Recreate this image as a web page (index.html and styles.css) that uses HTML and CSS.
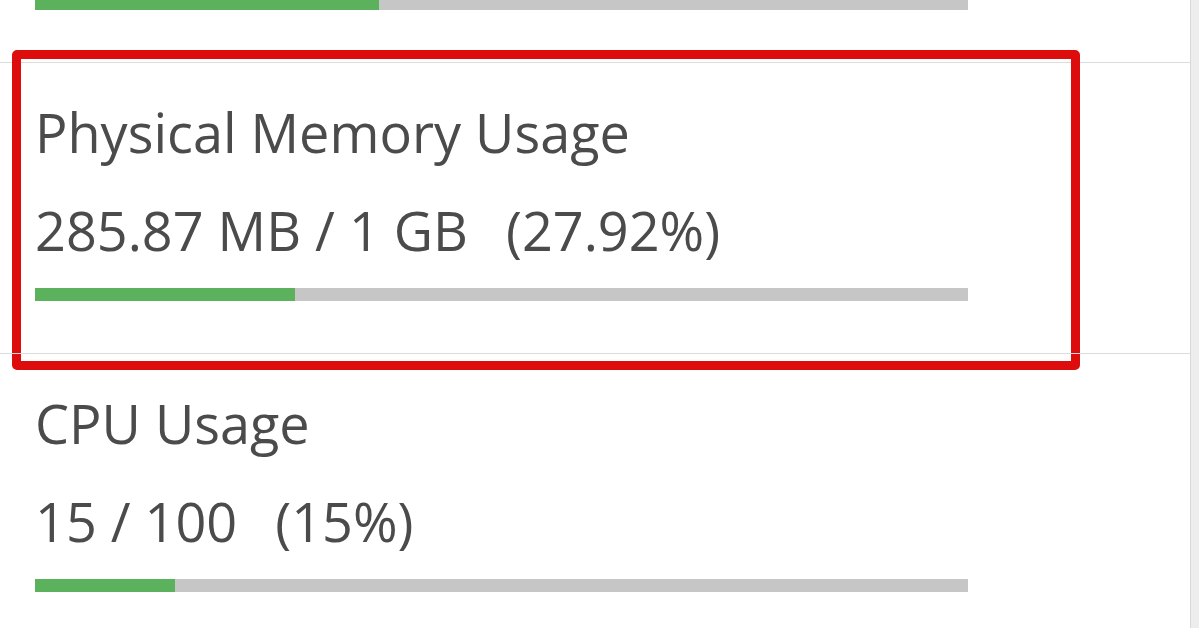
FILE: index.html
```html
<!DOCTYPE html>
<html>
<head>
<meta charset="utf-8">
<link rel="stylesheet" href="styles.css">
</head>
<body>
<div class="page">
  <div class="panel">
    <div class="stats">
      <div class="stat partial">
        <div class="bar"><div class="fill" style="width:36.9%"></div></div>
      </div>
      <div class="stat">
        <div class="title">Physical Memory Usage</div>
        <div class="value">285.87 MB / 1 GB <span class="pct">(27.92%)</span></div>
        <div class="bar"><div class="fill" style="width:27.92%"></div></div>
        <div class="highlight"></div>
      </div>
      <div class="stat">
        <div class="title">CPU Usage</div>
        <div class="value">15 / 100 <span class="pct">(15%)</span></div>
        <div class="bar"><div class="fill" style="width:15%"></div></div>
      </div>
    </div>
  </div>
  <div class="side"></div>
</div>
</body>
</html>
```
FILE: styles.css
```css
html, body {
  margin: 0;
  padding: 0;
  background: #ffffff;
  overflow: hidden;
}

.page {
  display: flex;
  width: 1199px;
  height: 628px;
  overflow: hidden;
}

.panel {
  width: 1190px;
  flex: none;
  border-right: 1px solid #d9d9d9;
  background: #ffffff;
}

.side {
  flex: 1;
  background: #ededed;
}

.stats {
  margin-top: -3px;
}

.stat {
  position: relative;
  border-top: 1px solid #dcdcdc;
  padding: 33px 0 52px 35px;
  font-family: "Open Sans", "DejaVu Sans", sans-serif;
  font-size: 54px;
  color: #4b4b4b;
}

.stat.partial {
  border-top: none;
  padding-top: 0;
}

.title {
  line-height: 72px;
  margin-bottom: 26px;
}

.value {
  line-height: 72px;
  margin-bottom: 22px;
}

.pct {
  margin-left: 24px;
}

.bar {
  width: 933px;
  height: 13px;
  background: #c6c6c6;
}

.fill {
  height: 100%;
  background: #5cb25c;
}

.highlight {
  position: absolute;
  left: 12px;
  top: -13px;
  width: 1068px;
  height: 320px;
  box-sizing: border-box;
  border: 9px solid #de0d0d;
  border-radius: 5px;
  pointer-events: none;
}
```
